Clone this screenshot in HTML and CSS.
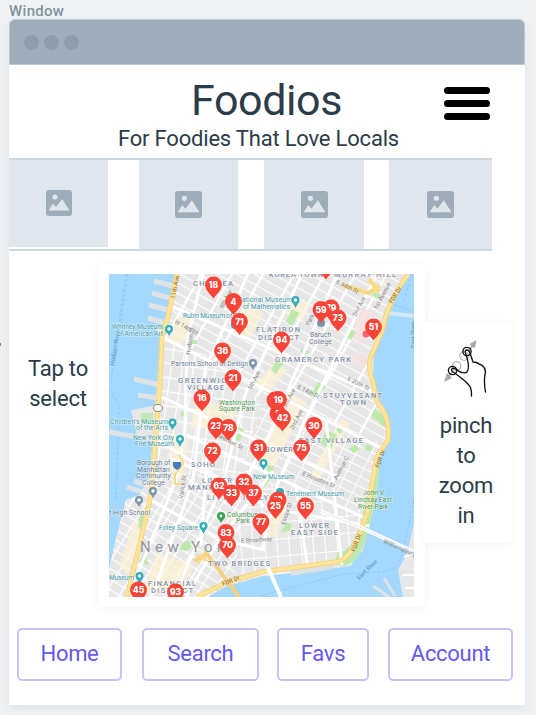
FILE: index.html
```html
<!DOCTYPE html>
<html lang="en">
<head>
<meta charset="utf-8">
<title>Foodios</title>
<link rel="stylesheet" href="styles.css">
</head>
<body>
<svg class="defs" width="0" height="0">
  <symbol id="photo" viewBox="0 0 26 26">
    <rect width="26" height="26" rx="3" fill="#9eadb9"/>
    <circle cx="9" cy="7" r="2.5" fill="#dfe6ee"/>
    <path d="M2.5 20.5L7 13.5L10 17L16.3 9L23.5 20.5Z" fill="#dfe6ee"/>
  </symbol>
</svg>
<div class="label">Window</div>
<main class="window">
  <div class="bar"><i></i><i></i><i></i></div>
  <header class="header">
    <h1>Foodios</h1>
    <p>For Foodies That Love Locals</p>
    <div class="menu"><b></b><b></b><b></b></div>
  </header>
  <section class="gallery">
    <div class="tile first"><svg><use href="#photo"/></svg></div>
    <div class="tile"><svg><use href="#photo"/></svg></div>
    <div class="tile third"><svg><use href="#photo"/></svg></div>
    <div class="tile last"><svg><use href="#photo"/></svg></div>
  </section>
  <section class="content">
    <div class="tap">Tap to<br>select</div>
    <div class="map-card">
      <svg class="map" viewBox="109 274 305 323">
        <defs>
          <pattern id="grid" width="27" height="9" patternUnits="userSpaceOnUse" patternTransform="translate(200 274) rotate(29)">
            <rect width="27" height="9" fill="#e7e7e7"/><path d="M0 0H27" stroke="#fff" stroke-width="2.4"/><path d="M0 0V9" stroke="#fff" stroke-width="4.5"/>
          </pattern>
          <pattern id="village" width="11" height="14" patternUnits="userSpaceOnUse" patternTransform="rotate(8)">
            <rect width="11" height="14" fill="#e8e8e8"/><path d="M0 0H11M0 0V14" stroke="#fff" stroke-width="2.6"/>
          </pattern>
          <pattern id="downtown" width="13" height="9" patternUnits="userSpaceOnUse" patternTransform="rotate(32)">
            <rect width="13" height="9" fill="#e7e7e7"/><path d="M0 0H13M0 0V9" stroke="#fff" stroke-width="2.6"/>
          </pattern>
          <pattern id="east" width="14" height="9" patternUnits="userSpaceOnUse" patternTransform="rotate(26)">
            <rect width="14" height="9" fill="#e7e7e7"/><path d="M0 0H14M0 0V9" stroke="#fff" stroke-width="2"/>
          </pattern>
          <pattern id="lower" width="12" height="17" patternUnits="userSpaceOnUse" patternTransform="rotate(-5)">
            <rect width="12" height="17" fill="#e7e7e7"/><path d="M0 0H12M0 0V17" stroke="#fff" stroke-width="2.2"/>
          </pattern>
          <clipPath id="island"><path d="M176 274H408L388 309L382 330L374 352L373 378L378 401L389 420L389 440L380 457L376 500L363 550L350 566L290 573L262 576L225 587L208 597H109V570L115 543L126 500L140 495L150 475L155 410L160 340L168 310Z"/></clipPath>
          <g id="pin"><path d="M0 13.5C-2.5 9.5-8.4 5.5-8.4 0A8.4 8.4 0 0 1 8.4 0C8.4 5.5 2.5 9.5 0 13.5Z"/></g>
        </defs>
        <rect x="109" y="274" width="305" height="323" fill="#a5d8fd"/>
        <g fill="none" stroke="#86bde9" stroke-width=".7" stroke-dasharray="3 2">
          <path d="M128 274L111 380M126 274L117 335L109 365M109 390L119 405L116 500"/>
          <path d="M260 596L343 574L380 572Q400 572 404 545L414 500M380 300L414 312M412 274L403 303"/>
        </g>
        <g stroke="#dfe3e5" stroke-width="5">
          <path d="M154 281L173 286M152 293L170 298M149 305L168 310M148 318L166 323M156 330L165 333M134 379L160 385M138 395L158 398M109 432L154 440M134 481L150 486M127 487L148 494"/>
        </g>
        <path d="M131 410L158 405L156 436L137 435Z" fill="#e7e7e7"/><path d="M141 413H153V424H141Z" fill="#c2e9b7"/>
        <g clip-path="url(#island)">
          <rect x="109" y="274" width="305" height="323" fill="url(#grid)"/>
          <path d="M162 342L205 354L262 400L242 474L146 500Z" fill="url(#village)"/>
          <path d="M150 475L245 474L264 560L200 600H109V500Z" fill="url(#downtown)"/>
          <path d="M262 400L390 445L376 500L350 520L244 474Z" fill="url(#east)"/>
          <path d="M243 475L370 515L350 570L235 588Z" fill="url(#lower)"/>
          <g fill="#fff2d3" opacity=".65">
            <path d="M179 315L195 320L181 346L167 343ZM245 302L264 313L248 340L233 331ZM275 362L288 370L268 392L255 384ZM289 393L307 402L274 467L259 462ZM341 418L350 423L319 480L310 476ZM197 401L238 407L230 430L190 428ZM170 433L189 438L184 480L170 477ZM271 503L284 507L278 538L264 536ZM135 520L148 525L127 575L119 565ZM157 553L194 565L179 596L143 592ZM292 296L310 304L303 320L286 314Z"/>
          </g>
          <path d="M359 308L374 311L364 345L351 338ZM356 351L369 356L365 368L348 360Z" fill="#f8dfe0" opacity=".75"/>
          <g fill="#bde9ad">
            <path d="M292 309L299 313L292 326L286 322ZM276 360L283 364L276 374L271 370ZM235 425L244 430L239 442L231 436ZM327 430L337 435L331 449L320 443ZM375 409L389 420L386 428L371 416ZM318 382L326 386L317 398L311 395ZM374 291L381 295L379 299L372 296ZM350 329L356 332L351 340L347 337ZM302 348L309 352L306 355L300 352ZM367 444L373 448L370 452L364 449ZM141 510L149 514L145 531L138 527ZM179 549Q187 533 192 547L186 551ZM144 551L149 565L139 563ZM274 466L270 480L264 487L268 465ZM287 522L292 525L289 531L281 532ZM339 427L344 430L340 434L336 430ZM354 444L360 449L354 453L349 449ZM192 340H197V344H191ZM181 412H187V416H181Z"/>
            <path d="M388 440L382 465L379 490L371 525Q361 563 344 566L336 565L337 552Q352 554 361 520L372 480L377 455Z"/>
          </g>
          <g fill="none" stroke="#fff" stroke-width="3">
            <path d="M203 274L187 340L185 430L176 480L128 597M248 274L206 367L193 480L152 597M302 274L245 395L224 480L174 597M337 274L269 435L246 479M377 274L305 420L277 485L262 550M171 306L372 392M162 337L383 449M159 396L340 478M157 440L268 508L375 527M150 500L222 540L265 550M187 435L222 452L365 518M169 459L268 496M186 597L219 540L273 471M207 456L201 546M326 420L342 565M296 485L308 570"/>
          </g>
          <path d="M342 285L368 293L380 286M369 279L379 292" fill="none" stroke="#f8db80" stroke-width="4"/>
        </g>
        <path d="M414 523L407 553L398 570L403 597H414Z" fill="#e5e7e8"/>
        <path d="M404 557L414 554M402 575H414M405 588H414" stroke="#fff" stroke-width="2"/>
        <path d="M290 570L333 563V569L291 576Z" fill="#dce1e4"/>
        <g fill="none" stroke="#dfe3e5" stroke-width="3"><path d="M373 586L389 597M384 578L395 596"/></g>
        <path d="M388 313L414 316" stroke="#d4e7f2" stroke-width="4"/>
        <g fill="none" stroke-linejoin="round">
          <path d="M177 274L169 312L162 337L160 382L157 420L151 495L140 543L127 597" stroke="#f3d27c" stroke-width="5"/>
          <path d="M177 274L169 312L162 337L160 382L157 420L151 495L140 543L127 597" stroke="#ffe49a" stroke-width="3.4"/>
          <path d="M408 274Q386 306 383 328L373 352Q366 364 373 382L377 402Q391 417 388 440L377 457L371 490L367 514L357 540Q348 561 335 562L262 572L227 582L197 597" stroke="#f3d27c" stroke-width="5"/>
          <path d="M408 274Q386 306 383 328L373 352Q366 364 373 382L377 402Q391 417 388 440L377 457L371 490L367 514L357 540Q348 561 335 562L262 572L227 582L197 597" stroke="#ffe49a" stroke-width="3.4"/>
          <path d="M194 561L207 554L239 597" stroke="#f5d37e" stroke-width="4"/>
          <path d="M197 555L210 562M198 565L206 550M179 454L183 464L175 475V484H182" stroke="#f7d98c" stroke-width="2"/>
          <path d="M320 511L360 527L414 552M265 561L281 597" stroke="#fff" stroke-width="4"/>
          <path d="M320 511L360 527L414 552" stroke="#dde1e4" stroke-width=".8"/>
        </g>
        <g class="road">
          <text transform="translate(175 299) rotate(-80)" fill="#896a35">11th Ave</text>
          <text transform="translate(174 323) rotate(29)">W 14th St</text>
          <text transform="translate(190 355) rotate(-82)">Hudson St</text>
          <text transform="translate(336 283) rotate(27)">E 34th St</text>
          <text transform="translate(309 326) rotate(-62)">Park Ave</text>
          <text transform="translate(356 317) rotate(-62)">2nd Ave</text>
          <text transform="translate(377 310) rotate(-62)">1st Avenue</text>
          <text transform="translate(392 304) rotate(-58)" fill="#80642e">FDR Dr</text>
          <text transform="translate(297 388) rotate(27)">E 14th St</text>
          <text transform="translate(347 380) rotate(27)">E 20th St</text>
          <text transform="translate(223 309) rotate(-62)">8th Ave</text>
          <text transform="translate(251 390) rotate(-62)">5th Ave</text>
          <text transform="translate(286 408) rotate(-62)">3rd Ave</text>
          <text transform="translate(293 430) rotate(-62)">2nd Ave</text>
          <text transform="translate(337 480) rotate(-62)">Avenue C</text>
          <text transform="translate(302 475) rotate(22)">E Houston St</text>
          <text transform="translate(215 436) rotate(27)">Bleecker St</text>
          <text transform="translate(183 499) rotate(-82)">Varick St</text>
          <text transform="translate(285 525) rotate(-72)">Essex St</text>
          <text transform="translate(241 543) rotate(-4)">E Broadway</text>
          <text transform="translate(379 468) rotate(-70)" fill="#80642e">FDR Dr</text>
          <text transform="translate(355 552) rotate(-70)" fill="#80642e">FDR Dr</text>
          <text transform="translate(223 586) rotate(-22)" fill="#80642e">FDR Dr</text>
          <text transform="translate(383 543) rotate(23)">Williamsburg Bridge</text>
          <text transform="translate(359 580) rotate(-44)" fill="#568fc9">East River</text>
          <text transform="translate(114 366) rotate(-80)" fill="#568fc9">Hudson River</text>
          <text transform="translate(415 348) rotate(-90)" fill="#568fc9">East River</text>
        </g>
        <g class="area">
          <text x="193" y="286" textLength="40">CHELSEA</text>
          <text x="269" y="277" textLength="54">KOREA TOWN</text><text x="334" y="277" textLength="62">MURRAY HILL</text>
          <text x="256" y="332" textLength="44">FLATIRON</text><text x="258" y="340" textLength="41">DISTRICT</text>
          <text x="275" y="362" textLength="76">GRAMERCY PARK</text>
          <text x="178" y="383" textLength="55">GREENWICH</text><text x="187" y="390" textLength="37">VILLAGE</text>
          <text x="323" y="398" textLength="59">STUYVESANT</text><text x="340" y="405" textLength="26">TOWN</text>
          <text x="299" y="443" textLength="64">EAST VILLAGE</text><text x="265" y="452" textLength="33">BOWERY</text>
          <text x="191" y="467" textLength="24">SOHO</text>
          <text x="202" y="483" textLength="30">LOWER</text><text x="188" y="490" textLength="57">MANHATTAN</text>
          <text x="207" y="500" textLength="61">LITTLE ITALY</text>
          <text x="299" y="528" textLength="30">LOWER</text><text x="291" y="535" textLength="47">EAST SIDE</text>
          <text x="208" y="566" textLength="62">TWO BRIDGES</text>
          <text x="148" y="586" textLength="48">FINANCIAL</text><text x="151" y="593" textLength="42">DISTRICT</text>
        </g>
        <text class="city" x="140" y="552" textLength="94">New York</text>
        <g class="place">
          <text x="237" y="302" textLength="55">National Museum</text><text x="243" y="309" textLength="47">of Mathematics</text>
          <text x="183" y="318" textLength="59">Rubin Museum of Art</text>
          <text x="112" y="329" textLength="51">Whitney Museum</text><text x="117" y="336" textLength="46">of American Art</text>
          <text x="171" y="366" textLength="77" fill="#687b91">Parsons School of Design</text>
          <text x="310" y="337" fill="#687b91">Baruch</text><text x="309" y="344" fill="#687b91">College</text>
          <text x="219" y="405" textLength="36" fill="#4b9350">Washington</text><text x="219" y="411" textLength="36" fill="#4b9350">Square Park</text>
          <text x="110" y="424" textLength="58">Children's Museum</text><text x="136" y="430" textLength="32">of the Arts</text>
          <text x="133" y="440" textLength="41">New York City</text><text x="135" y="446" textLength="39">Fire Museum</text>
          <g fill="#687b91"><text x="137" y="465">Borough of</text><text x="137" y="472">Manhattan</text><text x="136" y="478">Community</text><text x="142" y="485">College</text><text x="109" y="515" textLength="41">t High School</text></g>
          <text x="253" y="479" textLength="41">New Museum</text><text x="286" y="496" textLength="58">Tenement Museum</text>
          <g fill="#4b9350"><text x="363" y="495">John V</text><text x="354" y="502" textLength="38">Lindsay East</text><text x="358" y="509" textLength="30">River Park</text><text x="227" y="517">Columbus</text><text x="236" y="523">Park</text></g>
          <text x="159" y="530" textLength="39">Foley Square</text><text x="109" y="580" textLength="25">Museum</text>
        </g>
        <g class="poi">
          <circle cx="295.5" cy="300" r="4"/><circle cx="169" cy="329" r="4"/><circle cx="172.5" cy="422.500" r="4"/><circle cx="180" cy="439" r="4"/><circle cx="263.500" cy="463" r="4"/><circle cx="280" cy="492" r="4"/><circle cx="203.500" cy="526" r="4"/><circle cx="139.500" cy="576" r="4"/><circle cx="235" cy="325" r="4"/>
          <g fill="#7895ad"><circle cx="253" cy="363" r="4"/><circle cx="321" cy="323" r="4"/><circle cx="153" cy="491" r="4"/><circle cx="139" cy="500" r="4"/></g><circle cx="221" cy="516" r="4" fill="#39a451"/>
          <path d="M292.500 302L295.500 308L298.500 302M166 331L169 336L172 331M169.500 425L172.500 430L175.500 425M177 441L180 447L183 441M200.500 528L203.500 534L206.500 528M136.500 578L139.500 584L142.500 578M260.500 465L263.500 470L266.500 465"/>
          <path d="M250 365L253 370L256 365M150 493L153 498L156 493M136 502L139 507L142 502" fill="#7895ad"/>
          <path d="M218 518L221 523L224 518Z" fill="#39a451"/>
          <g fill="#fff"><circle cx="295.500" cy="300" r="1.700"/><circle cx="169" cy="329" r="1.700"/><circle cx="172.500" cy="422.500" r="1.700"/><circle cx="180" cy="439" r="1.700"/><circle cx="263.500" cy="463" r="1.700"/><circle cx="203.500" cy="526" r="1.700"/><circle cx="139.500" cy="576" r="1.700"/><circle cx="253" cy="363" r="1.700"/><circle cx="153" cy="491" r="1.700"/><circle cx="139" cy="500" r="1.700"/><circle cx="221" cy="516" r="1.400"/></g>
          <circle cx="366" cy="334" r="3.500" fill="#ef6772"/><ellipse cx="158" cy="408" rx="4.500" ry="3.500" fill="#fff" stroke="#888"/><path d="M173 462H181Q182 468 177 470Q172 468 173 462" fill="#4978be"/>
        </g>
        <g class="pins">
          <g transform="translate(326 266)"><use href="#pin"/></g>
          <g transform="translate(213.500 285)"><use href="#pin"/><text y="3">18</text></g>
          <g transform="translate(233.500 301.500)"><use href="#pin"/><text y="3">4</text></g>
          <g transform="translate(239.500 321.500)"><use href="#pin"/><text y="3">71</text></g>
          <g transform="translate(331 308)"><use href="#pin"/><text y="3">79</text></g>
          <g transform="translate(321 309.500)"><use href="#pin"/><text y="3">59</text></g>
          <g transform="translate(338 318)"><use href="#pin"/><text y="3">73</text></g>
          <g transform="translate(373.500 327)"><use href="#pin"/><text y="3">51</text></g>
          <g transform="translate(281.500 340)"><use href="#pin"/><text y="3">94</text></g>
          <g transform="translate(222.500 351)"><use href="#pin"/><text y="3">36</text></g>
          <g transform="translate(233 378)"><use href="#pin"/><text y="3">21</text></g>
          <g transform="translate(202 398)"><use href="#pin"/><text y="3">16</text></g>
          <g transform="translate(275 400)"><use href="#pin"/><text y="3">61</text></g>
          <g transform="translate(278.500 399.500)"><use href="#pin"/><text y="3">19</text></g>
          <g transform="translate(278 413.500)"><use href="#pin"/><text y="3">5</text></g>
          <g transform="translate(282.500 418)"><use href="#pin"/><text y="3">42</text></g>
          <g transform="translate(314 425.500)"><use href="#pin"/><text y="3">30</text></g>
          <g transform="translate(216 426)"><use href="#pin"/><text y="3">23</text></g>
          <g transform="translate(228.500 427.500)"><use href="#pin"/><text y="3">78</text></g>
          <g transform="translate(212.500 451)"><use href="#pin"/><text y="3">72</text></g>
          <g transform="translate(258.500 448)"><use href="#pin"/><text y="3">31</text></g>
          <g transform="translate(301.500 448)"><use href="#pin"/><text y="3">75</text></g>
          <g transform="translate(244 482)"><use href="#pin"/><text y="3">32</text></g>
          <g transform="translate(219 486)"><use href="#pin"/><text y="3">62</text></g>
          <g transform="translate(231.500 493)"><use href="#pin"/><text y="3">33</text></g>
          <g transform="translate(253.500 493)"><use href="#pin"/><text y="3">37</text></g>
          <g transform="translate(278 500)"><use href="#pin"/><text y="3">12</text></g>
          <g transform="translate(275.500 505.500)"><use href="#pin"/><text y="3">25</text></g>
          <g transform="translate(305.500 506)"><use href="#pin"/><text y="3">55</text></g>
          <g transform="translate(261 522)"><use href="#pin"/><text y="3">77</text></g>
          <g transform="translate(226 532.500)"><use href="#pin"/><text y="3">83</text></g>
          <g transform="translate(227.500 545)"><use href="#pin"/><text y="3">70</text></g>
          <g transform="translate(138.500 590)"><use href="#pin"/><text y="3">45</text></g>
          <g transform="translate(175.500 592)"><use href="#pin"/><text y="3">93</text></g>
        </g>
      </svg>
    </div>
    <div class="pinch-card">
      <svg class="hand" viewBox="0 0 44 60">
        <g fill="none" stroke="#b5b5b5" stroke-width="1.200"><circle cx="20" cy="17" r="4.300"/><circle cx="12.500" cy="27" r="4.300"/></g>
        <path d="M32.500 1L25.500 5L27.500 7L24 11L25 12L29 8L31 9ZM0 43L3 34L5 36L9 31L10 32L6 37L8 39Z" fill="#aaa"/>
        <g fill="none" stroke="#111" stroke-width="1.350" stroke-linecap="round" stroke-linejoin="round"><circle cx="23" cy="12.500" r="4.100"/><circle cx="8.500" cy="31.500" r="4.100"/><path d="M27.500 57C28 49 26 47 22 43C17 39 14 36 9 33C6 31 8 28 12 30C15 33 20 35 23 33C26 29 24 21 21.500 14C20 10 25 10 26 14L29 23C30 24 32 22 35 25C39 26 41 28 41.500 33C40 39 40 45 41.500 53"/></g>
      </svg>
      <p>pinch<br>to<br>zoom<br>in</p>
    </div>
  </section>
  <nav class="nav"><a class="home">Home</a><a class="search">Search</a><a class="favs">Favs</a><a class="account">Account</a></nav>
</main>
<span class="edge"></span>
</body>
</html>
```
FILE: styles.css
```css
* { box-sizing: border-box; }
body { margin: 0; height: 715px; overflow: hidden; background: #eff3f6; font-family: Roboto, "Liberation Sans", sans-serif; color: #2d3c49; }
h1, p { margin: 0; font-weight: 400; }
.defs { position: absolute; }
.label { height: 19px; padding: 3px 0 0 9px; font-size: 15px; line-height: 17px; font-weight: 500; letter-spacing: .3px; color: #82919f; }
.window { width: 516px; height: 686px; margin-left: 9px; background: #fff; border-radius: 6px 6px 0 0; box-shadow: 0 4px 12px #dce3e8; }
.bar { height: 46px; display: flex; align-items: center; gap: 5px; padding: 0 0 0 14px; background: #9eadb9; border: 1px solid #bdcad4; border-radius: 6px 6px 0 0; }
.bar i { width: 15px; height: 15px; border-radius: 50%; background: #8d9dab; }
.header { position: relative; height: 93px; text-align: center; }
h1 { width: 516px; padding: 9px 1px 0 0; font-size: 43px; line-height: 52px; letter-spacing: -.4px; }
.header p { width: 516px; padding-right: 17px; font-size: 22px; line-height: 26px; letter-spacing: -.2px; }
.menu { position: absolute; left: 435px; top: 22px; display: grid; gap: 6px; }
.menu b { width: 46px; height: 7px; border-radius: 4px; background: #000; }
.gallery { width: 483px; height: 93px; display: grid; grid-template-columns: 130px 125px 125px 103px; border: solid #cdd8e1; border-width: 2px 0; }
.tile { width: 99px; height: 89px; background: #dfe6ee; display: grid; place-items: center; }
.tile svg { width: 27px; height: 27px; }
.first { height: 87px; }
.first svg { width: 26px; height: 26px; margin-bottom: 2px; }
.third { width: 100px; }
.last { width: 103px; }
.content { height: 343px; margin-top: 13px; display: flex; align-items: flex-start; }
.tap { width: 90px; padding: 90px 0 0 8px; text-align: center; font-size: 22px; line-height: 30px; letter-spacing: -.2px; }
.map-card { width: 326px; height: 343px; padding: 10px; background: #fff; border-radius: 5px; box-shadow: 0 2px 12px #0000000d; }
.map { display: block; width: 305px; height: 323px; }
.road { font: 6px Roboto; fill: #858585; }
.area { font: 500 7.500px Roboto; fill: #8291a5; stroke: #fff; stroke-opacity: .6; stroke-width: 1.200px; paint-order: stroke; }
.place { font: 6.800px Roboto; fill: #4299a6; stroke: #fff; stroke-opacity: .6; stroke-width: 1.200px; paint-order: stroke; }
.city { font: 15px Roboto; fill: #93989f; }
.poi { fill: #30aebd; }
.pins { fill: #fa4438; font: 800 8.500px Inter, sans-serif; text-anchor: middle; }
.pins text { fill: #fff; }
.pinch-card { position: relative; width: 89px; height: 221px; margin: 58px 0 0 -2px; padding-top: 17px; background: #fff; border-radius: 4px; box-shadow: 0 2px 10px #0000000d; text-align: center; font-size: 22px; line-height: 30px; letter-spacing: -.2px; }
.hand { display: block; width: 44px; height: 60px; margin: 0 0 12px 21px; }
.pinch-card p { padding-right: 3px; }
.nav { display: flex; padding: 21px 0 0 8px; }
.nav a { height: 53px; border: 2px solid #c8c2fa; border-radius: 5px; text-align: center; font-size: 22px; line-height: 48px; color: #6558ef; letter-spacing: -.3px; }
.home { width: 105px; }
.search { width: 117px; margin-left: 20px; }
.favs { width: 92px; margin-left: 18px; }
.account { width: 125px; margin-left: 19px; }
.edge { position: absolute; left: 0; top: 343px; width: 1px; height: 3px; background: #7d8992; }
```
